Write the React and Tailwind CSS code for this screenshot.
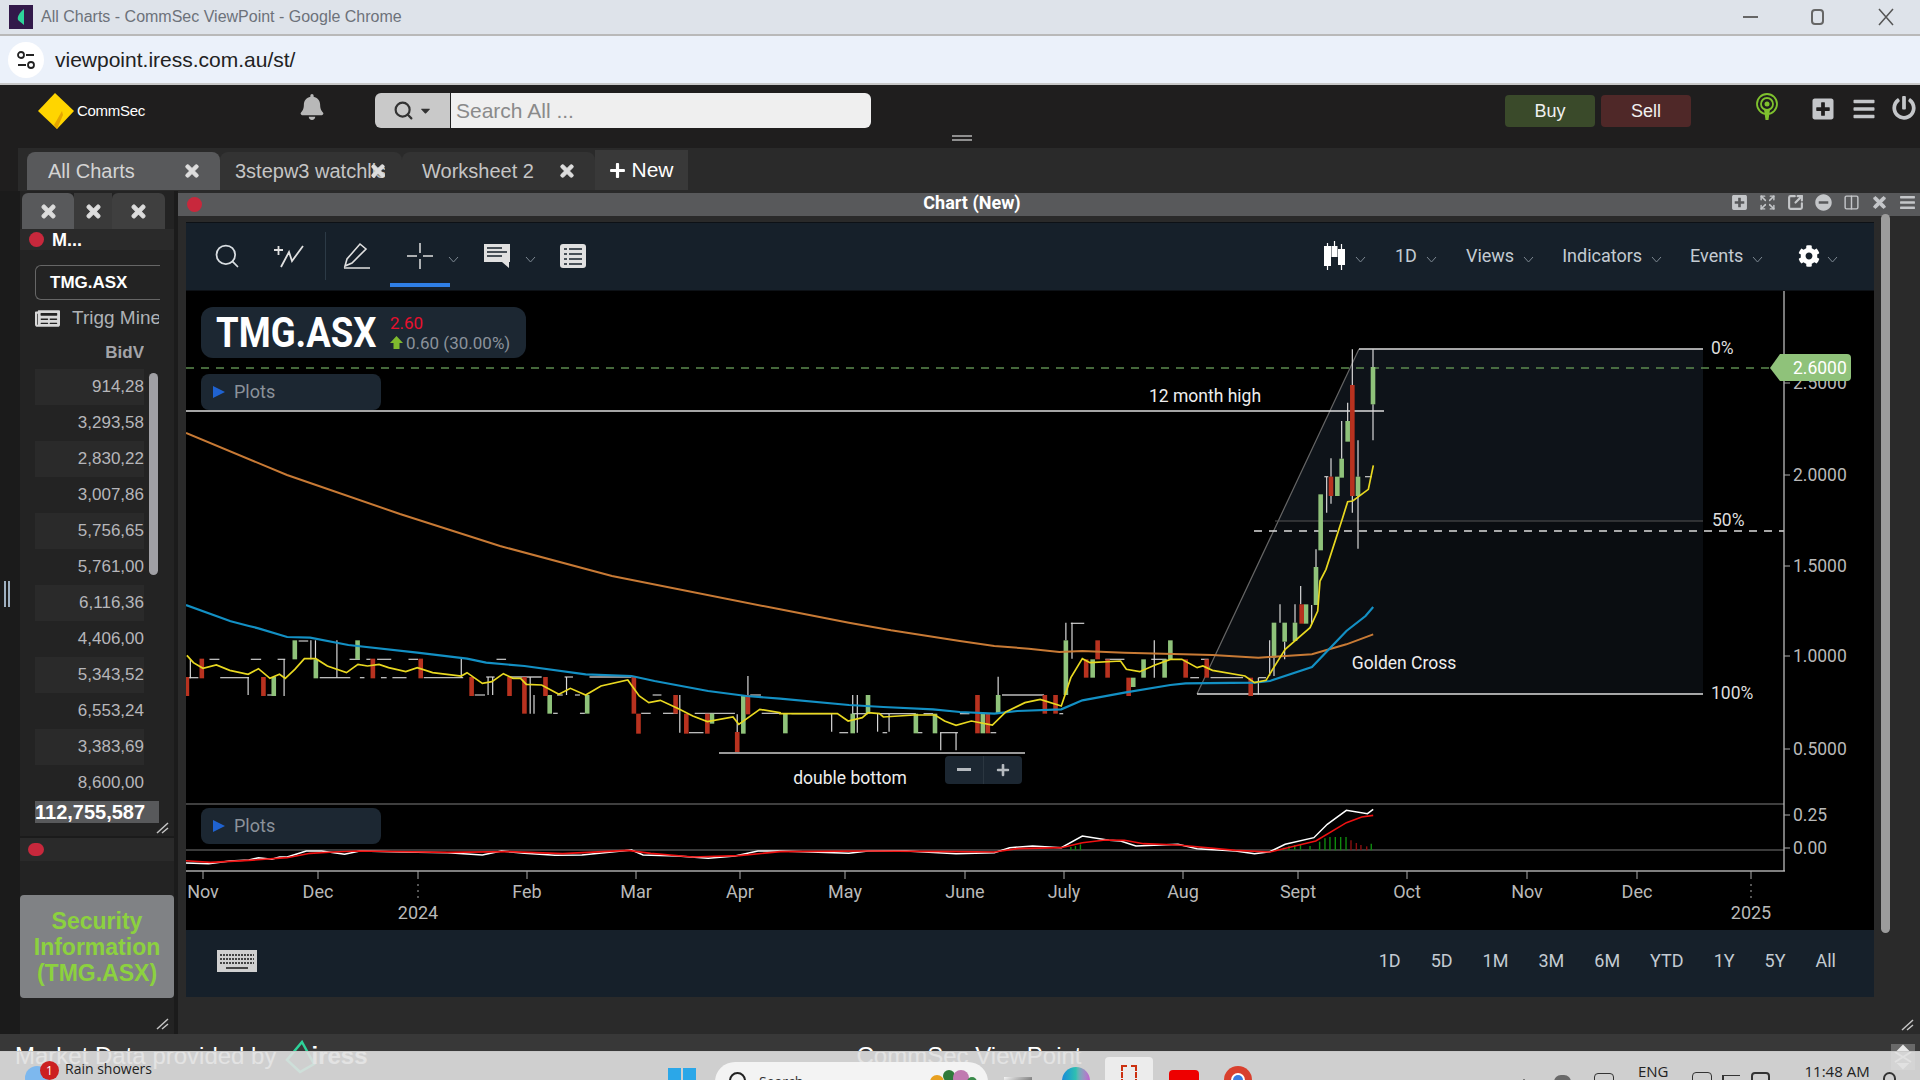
import { FaBars, FaBell, FaCog, FaMinusCircle, FaNewspaper, FaPlus, FaPlusSquare, FaPowerOff, FaTimes, FaCaretDown } from 'react-icons/fa';
import { Search, Columns2, SquareArrowOutUpRight, Expand } from 'lucide-react';

// chart numbers were read off crops of the picture, so each block has its own scale
const a = ([x, y]) => [180 + x / 2.613, 620 + y / 3];
const b = ([x, y]) => [780 + x / 2.613, 580 + y / 3];
const c = ([x, y]) => [1200 + x / 3, 330 + y / 3];
const toPoints = (list) => list.map((p) => p.join(',')).join(' ');

const yellow = [
  ...[[18, 103], [35, 125], [60, 142], [95, 132], [130, 148], [178, 160], [205, 143], [235, 172], [260, 160], [275, 172], [300, 145], [325, 113], [355, 113], [385, 135], [435, 155], [465, 130], [490, 135], [520, 130], [545, 140], [590, 152], [620, 140], [660, 155], [735, 165], [750, 155], [790, 187], [815, 182], [845, 158], [870, 172], [890, 172], [905, 190], [945, 192], [990, 220], [1020, 202], [1060, 222], [1100, 195], [1170, 177], [1200, 225], [1225, 245], [1255, 238], [1300, 262], [1340, 285], [1378, 302], [1445, 288], [1460, 310], [1515, 265], [1568, 275]].map(a),
  ...[[0, 398], [150, 398], [178, 420], [215, 410], [230, 395], [260, 398], [270, 408], [350, 402], [405, 402], [430, 420], [460, 433], [500, 420], [555, 432], [590, 393], [640, 365], [680, 355], [735, 375], [760, 290], [790, 233], [810, 245], [890, 240], [905, 265], [940, 272], [980, 252], [1020, 235], [1050, 235], [1090, 260], [1105, 255], [1130, 268], [1215, 285], [1240, 305], [1270, 298], [1290, 260], [1320, 205], [1385, 140], [1405, 90]].map(b),
  ...[[360, 750], [378, 715], [428, 560], [443, 512], [458, 510], [505, 475], [520, 403]].map(c),
];
const blue = [
  [186, 604], [230, 620],
  ...[[130, 0], [180, 15], [205, 22], [280, 48], [340, 50], [440, 72], [620, 95], [750, 113], [800, 125], [900, 135], [1060, 160], [1180, 165], [1240, 180], [1380, 210], [1480, 225], [1568, 233]].map(a),
  ...[[180, 372], [270, 378], [400, 385], [470, 393], [560, 398], [620, 390], [735, 385], [790, 358], [900, 335], [1020, 312], [1060, 307], [1240, 305], [1280, 300], [1390, 258], [1480, 150], [1530, 105], [1550, 78]].map(b),
];
const orange = [
  [186, 432], [287, 474], [400, 513], [500, 545], [612, 575],
  ...[[0, 85], [180, 125], [290, 148], [470, 180], [560, 195], [650, 203], [730, 213], [790, 210], [900, 215], [1130, 222], [1250, 230], [1390, 220], [1480, 190], [1550, 160]].map(b),
];
const macdWhite = [
  ...[[0, 725], [75, 728], [130, 720], [180, 717], [205, 710], [240, 715], [260, 708], [280, 708], [330, 690], [370, 690], [430, 700], [470, 690], [580, 693], [700, 695], [790, 702], [840, 690], [900, 697], [980, 703], [1050, 702], [1180, 687], [1210, 702], [1300, 705], [1380, 712], [1450, 705], [1510, 690], [1568, 690]].map(a),
  ...[[180, 817], [230, 810], [330, 810], [460, 818], [560, 815], [600, 800], [660, 795], [735, 800], [790, 765], [860, 778], [890, 780], [930, 795], [1040, 790], [1090, 803], [1190, 810], [1240, 818], [1280, 812], [1320, 790], [1395, 770], [1430, 730], [1480, 688], [1535, 698], [1550, 685]].map(b),
];
const macdRed = [
  ...[[0, 718], [80, 724], [180, 718], [280, 710], [340, 697], [400, 693], [470, 690], [700, 694], [860, 692], [1000, 698], [1170, 688], [1230, 697], [1340, 708], [1460, 704], [1568, 692]].map(a),
  ...[[230, 810], [460, 812], [560, 813], [620, 803], [735, 800], [790, 785], [850, 777], [900, 778], [950, 788], [1040, 792], [1190, 808], [1280, 813], [1400, 780], [1480, 725], [1520, 708], [1550, 703]].map(b),
];

const greenBodies = [
  ...[[245, 168, 225], [300, 58, 115], [355, 115, 172], [464, 58, 115], [966, 222, 278], [1064, 222, 278], [1390, 278, 308], [1472, 222, 338]].map(([x, t, e]) => [a([x, t]), a([x, e])]),
  ...[[14, 398, 457], [190, 398, 457], [230, 342, 398], [355, 398, 457], [405, 398, 457], [530, 398, 457], [570, 342, 398], [747, 178, 342], [817, 235, 290], [923, 290, 318], [950, 235, 290], [1005, 235, 290], [1020, 178, 235]].map(([x, t, e]) => [b([x, t]), b([x, e])]),
  ...[[222, 875, 980], [254, 875, 932], [285, 875, 930], [318, 820, 878], [348, 708, 822], [362, 490, 658], [412, 437, 495], [425, 383, 440], [443, 270, 332], [474, 437, 495], [519, 108, 220]].map(([x, t, e]) => [c([x, t]), c([x, e])]),
];
const redBodies = [
  ...[[18, 168, 225], [57, 113, 172], [218, 168, 225], [504, 113, 172], [629, 113, 172], [762, 168, 225], [861, 168, 225], [900, 168, 278], [955, 168, 225], [1186, 168, 278], [1198, 278, 338], [1295, 222, 278], [1323, 278, 338], [1378, 278, 338], [1456, 333, 393], [1484, 222, 280]].map(([x, t, e]) => [a([x, t]), a([x, e])]),
  ...[[516, 342, 457], [543, 398, 457], [692, 342, 398], [720, 342, 398], [800, 235, 290], [830, 178, 235], [856, 235, 290], [911, 290, 345], [1060, 235, 290], [1115, 235, 290], [1230, 290, 345]].map(([x, t, e]) => [b([x, t]), b([x, e])]),
  ...[[305, 820, 878], [393, 437, 495], [457, 162, 495]].map(([x, t, e]) => [c([x, t]), c([x, e])]),
];
const wicks = [
  ...[[27, 115, 172], [178, 168, 222], [245, 168, 225], [272, 115, 225], [342, 58, 115], [354, 58, 115], [410, 58, 170], [735, 113, 170], [805, 168, 222], [817, 168, 222], [915, 168, 278], [925, 222, 278], [1010, 168, 222], [1306, 222, 335], [1484, 165, 225], [1456, 280, 333]].map(([x, t, e]) => [a([x, t]), a([x, e])]),
  ...[[135, 398, 452], [190, 342, 400], [202, 342, 455], [255, 398, 452], [285, 398, 452], [420, 455, 508], [460, 455, 508], [570, 287, 342], [747, 125, 178], [763, 125, 233], [978, 178, 290], [1250, 290, 340]].map(([x, t, e]) => [b([x, t]), b([x, e])]),
  ...[[209, 928, 1035], [222, 980, 1035], [240, 820, 875], [254, 932, 985], [285, 820, 875], [302, 765, 820], [335, 822, 880], [348, 655, 708], [380, 438, 545], [393, 382, 437], [393, 495, 518], [425, 270, 383], [443, 215, 270], [457, 55, 162], [457, 495, 545], [474, 328, 437], [474, 495, 653], [519, 55, 108], [519, 220, 328]].map(([x, t, e]) => [c([x, t]), c([x, e])]),
];
const dashes = [
  ...[[77, 103, 115], [185, 212, 115], [255, 275, 115], [310, 335, 60], [22, 48, 170], [105, 180, 170], [228, 250, 222], [365, 445, 170], [470, 482, 170], [525, 540, 170], [555, 592, 170], [443, 470, 115], [487, 498, 115], [515, 552, 115], [597, 622, 115], [637, 740, 170], [827, 852, 115], [770, 797, 222], [800, 822, 168], [860, 945, 168], [1005, 1027, 168], [985, 1000, 222], [1032, 1045, 222], [1070, 1180, 168], [975, 987, 277], [1045, 1058, 277], [1235, 1258, 222], [1205, 1230, 277], [1262, 1300, 277], [1345, 1450, 277], [1330, 1368, 335], [1520, 1568, 277], [1490, 1518, 222]].map(([x, e, y]) => [a([x, y]), a([e, y])]),
  ...[[30, 135, 398], [155, 178, 455], [190, 230, 398], [260, 285, 398], [268, 280, 455], [285, 355, 398], [375, 400, 398], [360, 372, 455], [418, 465, 455], [470, 495, 398], [580, 690, 342], [730, 740, 398], [760, 795, 127], [850, 900, 235], [970, 1010, 235], [1100, 1120, 235], [1072, 1095, 290], [1125, 1210, 290], [1250, 1270, 290], [550, 565, 455]].map(([x, e, y]) => [b([x, y]), b([e, y])]),
  ...[[373, 385, 437], [495, 515, 437]].map(([x, e, y]) => [c([x, y]), c([e, y])]),
];
const macdBars = [760, 772, 785, 1300, 1316, 1330, 1345, 1360, 1385, 1410, 1424, 1437, 1451, 1465, 1479, 1545].map((x, i) => [b([x, 808]), b([x, [798, 795, 790, 803, 800, 795, 792, 792, 795, 782, 772, 768, 768, 768, 768, 788][i]])]);
const macdRedBars = [1492, 1506, 1518, 1533].map((x, i) => [b([x, 808]), b([x, [778, 786, 792, 796][i]])]);

const monthLabels = [
  ['Nov', 203], ['Dec', 318], ['Feb', 527], ['Mar', 636], ['Apr', 740], ['May', 845], ['June', 965], ['July', 1064], ['Aug', 1183], ['Sept', 1298], ['Oct', 1407], ['Nov', 1527], ['Dec', 1637],
];
const priceLabels = [['2.5000', 382], ['2.0000', 474], ['1.5000', 565], ['1.0000', 655], ['0.5000', 748], ['0.25', 814], ['0.00', 847]];
const bids = ['914,28', '3,293,58', '2,830,22', '3,007,86', '5,756,65', '5,761,00', '6,116,36', '4,406,00', '5,343,52', '6,553,24', '3,383,69', '8,600,00'];
const ranges = ['1D', '5D', '1M', '3M', '6M', 'YTD', '1Y', '5Y', 'All'];

function Chevron({ className = '' }) {
  return (
    <svg width="11" height="7" viewBox="0 0 11 7" className={className}>
      <path d="M1 1l4.500 5L10 1" fill="none" stroke="#7c8791" strokeWidth="1" />
    </svg>
  );
}

function Chart() {
  return (
    <svg viewBox="186 290 1688 640" width="1688" height="640" className="block">
      <polygon points="1278,520 1359,348 1703,348 1703,520" fill="#0e1319" />
      <polygon points="1197,693 1278,520 1703,520 1703,693" fill="#0a0d11" />
      <line x1="1197" y1="693" x2="1359" y2="348" stroke="#666" strokeWidth="1.200" />
      <line x1="1359" y1="348" x2="1703" y2="348" stroke="#ddd" strokeWidth="1.500" />
      <line x1="1197" y1="693" x2="1703" y2="693" stroke="#ddd" strokeWidth="1.500" />
      <line x1="1275" y1="520" x2="1703" y2="520" stroke="#555" strokeWidth="1" />
      <line x1="186" y1="367" x2="1772" y2="367" stroke="#5c8a4f" strokeWidth="1.500" strokeDasharray="8 7" />
      <line x1="1254" y1="530" x2="1784" y2="530" stroke="#ddd" strokeWidth="1.500" strokeDasharray="8 7" />
      <line x1="186" y1="410" x2="1384" y2="410" stroke="#ddd" strokeWidth="1.500" />
      <line x1="719" y1="752" x2="1025" y2="752" stroke="#ccc" strokeWidth="1.500" />

      {dashes.map(([p, q], i) => (
        <line key={i} x1={p[0]} y1={p[1]} x2={q[0]} y2={q[1]} stroke="#bbb" strokeWidth="1.300" />
      ))}
      {wicks.map(([p, q], i) => (
        <line key={i} x1={p[0]} y1={p[1]} x2={q[0]} y2={q[1]} stroke="#d8d8d8" strokeWidth="1.200" />
      ))}
      {greenBodies.map(([p, q], i) => (
        <rect key={i} x={p[0] - 2.300} y={p[1]} width="4.600" height={q[1] - p[1]} fill="#8fc27a" />
      ))}
      {redBodies.map(([p, q], i) => (
        <rect key={i} x={p[0] - 2.300} y={p[1]} width="4.600" height={q[1] - p[1]} fill="#b8321f" />
      ))}

      <polyline points={toPoints(orange)} fill="none" stroke="#c87a35" strokeWidth="2" />
      <polyline points={toPoints(blue)} fill="none" stroke="#1390c4" strokeWidth="2.200" />
      <polyline points={toPoints(yellow)} fill="none" stroke="#e8d820" strokeWidth="1.700" />

      <text x="1205" y="401" textAnchor="middle" fontFamily="Roboto" fontSize="17.500" fill="#eee">12 month high</text>
      <text x="1404" y="668" textAnchor="middle" fontFamily="Roboto" fontSize="17.500" fill="#eee">Golden Cross</text>
      <text x="850" y="783" textAnchor="middle" fontFamily="Roboto" fontSize="17.500" fill="#eee">double bottom</text>
      <text x="1711" y="353" fontFamily="Roboto" fontSize="17.500" fill="#ddd">0%</text>
      <text x="1712" y="525" fontFamily="Roboto" fontSize="17.500" fill="#ddd">50%</text>
      <text x="1711" y="698" fontFamily="Roboto" fontSize="17.500" fill="#ddd">100%</text>

      <line x1="186" y1="803" x2="1784" y2="803" stroke="#555" strokeWidth="1.500" />
      <line x1="186" y1="849" x2="1784" y2="849" stroke="#777" strokeWidth="1.200" />
      {macdBars.map(([p, q], i) => (
        <line key={i} x1={p[0]} y1={p[1]} x2={q[0]} y2={q[1]} stroke="#0f8a0f" strokeWidth="1.400" />
      ))}
      {macdRedBars.map(([p, q], i) => (
        <line key={i} x1={p[0]} y1={p[1]} x2={q[0]} y2={q[1]} stroke="#8a1010" strokeWidth="1.400" />
      ))}
      <polyline points={toPoints(macdWhite)} fill="none" stroke="#fff" strokeWidth="1.500" />
      <polyline points={toPoints(macdRed)} fill="none" stroke="#ee1111" strokeWidth="1.600" />

      <line x1="186" y1="870" x2="1785" y2="870" stroke="#aaa" strokeWidth="1.300" />
      <line x1="1784" y1="290" x2="1784" y2="870" stroke="#bbb" strokeWidth="1.300" />
      {monthLabels.map(([name, x], i) => (
        <g key={i}>
          <line x1={x} y1="870" x2={x} y2="878" stroke="#aaa" />
          <text x={x} y="897" textAnchor="middle" fontFamily="Roboto" fontSize="18" fill="#b9b9b9">{name}</text>
        </g>
      ))}
      <path d="M418 870v8M418 883v2M418 889v2M418 895v2M1751 870v8M1751 883v2M1751 889v2M1751 895v2" stroke="#aaa" />
      <text x="418" y="918" textAnchor="middle" fontFamily="Roboto" fontSize="18" fill="#b9b9b9">2024</text>
      <text x="1751" y="918" textAnchor="middle" fontFamily="Roboto" fontSize="18" fill="#b9b9b9">2025</text>
      {priceLabels.map(([name, y]) => (
        <g key={name}>
          <line x1="1784" y1={y} x2="1790" y2={y} stroke="#aaa" />
          <text x="1793" y={y + 6} fontFamily="Roboto" fontSize="17.500" fill="#b9b9b9">{name}</text>
        </g>
      ))}
      <path d="M1770 367l10-14h67a4 4 0 014 4v19a4 4 0 01-4 4h-67z" fill="#8fc27a" />
      <text x="1793" y="373" fontFamily="Roboto" fontSize="17.500" fill="#fff">2.6000</text>
    </svg>
  );
}

function PlotsButton({ className }) {
  return (
    <div className={`absolute left-[15px] flex h-[36px] w-[180px] items-center rounded-lg bg-[#1c2732] pl-3 font-['Roboto'] text-lg text-[#8b929a] ${className}`}>
      <span className="mr-[9px] h-0 w-0 border-y-[6px] border-l-[12px] border-y-transparent border-l-[#1f62d0]" />
      Plots
    </div>
  );
}

function ToolbarLabel({ children, className = '' }) {
  return (
    <div className={`flex items-center gap-[9px] text-lg text-[#c3cbd2] ${className}`}>
      {children}
      <Chevron className="mt-2" />
    </div>
  );
}

function LeftPanel() {
  return (
    <div className="flex w-[154px] flex-col bg-[#232323] font-['Liberation_Sans',sans-serif]">
      <div className="mt-[2px] flex h-[36px] w-[146px] pl-[2px] text-[#ddd]">
        <div className="flex w-[52px] items-center justify-center rounded-t-md bg-[#58595b]"><FaTimes size={19} className="stroke-[30]" /></div>
        <div className="flex w-[38px] items-center justify-center bg-[#3a3a3a]"><FaTimes size={19} className="stroke-[30]" /></div>
        <div className="flex w-[53px] items-center justify-center rounded-t-md bg-[#3f3f3f]"><FaTimes size={19} className="stroke-[30]" /></div>
      </div>
      <div className="flex h-[21px] items-center bg-[#2a2a2a] pl-[9px]">
        <span className="h-[15px] w-[15px] rounded-full bg-[#c8283c]" />
        <span className="ml-2 text-lg font-bold text-white">M...</span>
      </div>
      <div className="relative flex h-[588px] flex-col border-b-2 border-[#1b1b1b] pl-[15px]">
        <div className="mt-[15px] flex h-[35px] w-[125px] items-center rounded-tl-md rounded-bl-md border-y border-l border-[#666] pl-[14px] text-[17px] font-bold text-white">TMG.ASX</div>
        <div className="flex h-[36px] w-[124px] items-center overflow-hidden">
          <FaNewspaper size={25} className="shrink-0 text-[#d8d8d8]" />
          <span className="ml-[12px] whitespace-nowrap text-[19px] text-[#aeb2b6]">Trigg Mine</span>
        </div>
        <div className="h-[33px] w-[109px] overflow-hidden pt-[7px] text-right text-[17px] font-bold leading-5 text-[#a4a4a8]">BidV</div>
        {bids.map((bid, i) => (
          <div key={bid} className={`flex h-[36px] w-[109px] items-center justify-end overflow-hidden text-[17px] text-[#b6b6ba] ${i % 2 === 0 ? 'bg-[#2a2a2a]' : ''}`}>
            <span className="whitespace-nowrap">{bid}</span>
          </div>
        ))}
        <div className="flex h-[22px] w-[124px] items-center bg-[#58595b] text-[20px] font-bold text-white">112,755,587</div>
        <div className="absolute right-[16px] top-[123px] h-[202px] w-[9px] rounded-full bg-[#a0a0a5]" />
        <ResizeGrip className="absolute bottom-[2px] right-[5px]" />
      </div>
      <div className="flex h-[23px] items-center bg-[#2a2a2a] pl-[8px]">
        <span className="h-[13px] w-[16px] rounded-full bg-[#c8283c]" />
      </div>
      <div className="h-[34px]" />
      <div className="flex h-[103px] flex-col items-center justify-center rounded bg-[#808285] text-center text-[23px] font-bold leading-[26px] text-[#8cd13f]">
        <span>Security</span>
        <span>Information</span>
        <span>(TMG.ASX)</span>
      </div>
      <div className="relative flex-1">
        <ResizeGrip className="absolute bottom-[4px] right-[5px]" />
      </div>
    </div>
  );
}

function ResizeGrip({ className }) {
  return (
    <svg width="13" height="12" viewBox="0 0 13 12" className={className}>
      <path d="M1 11L12 1M6 11l6-5" stroke="#c4c4c4" strokeWidth="1.500" />
    </svg>
  );
}

function TitleIcons() {
  return (
    <div className="flex items-center gap-[11px] pr-[4px] text-[#c4c6c9]">
      <FaPlusSquare size={17} />
      <Expand size={17} />
      <SquareArrowOutUpRight size={17} strokeWidth={3} />
      <FaMinusCircle size={17} />
      <Columns2 size={17} />
      <FaTimes size={17} className="stroke-[30]" />
      <FaBars size={17} />
    </div>
  );
}

function ChartWindow() {
  return (
    <div className="flex min-w-0 flex-1 flex-col bg-[#2a2a2a] font-['Roboto',sans-serif]">
      <div className="mt-[2px] flex h-[23px] items-center bg-[#58595b] pl-[9px]">
        <span className="h-[15px] w-[15px] rounded-full bg-[#c8283c]" />
        <span className="ml-[690px] w-[160px] pb-[4px] text-center text-lg font-bold text-white">Chart (New)</span>
        <div className="ml-auto pb-[4px]"><TitleIcons /></div>
      </div>
      <div className="flex flex-1">
        <div className="ml-[8px] mt-[6px] flex w-[1688px] flex-col">
          <div className="flex h-[69px] items-center border-y border-[#0d1116] bg-[#16202a] pb-[2px] pl-[27px] text-[#d8dde1]">
            <Search size={28} strokeWidth={1.500} />
            <svg width="32" height="26" viewBox="0 0 32 26" className="ml-[32px]">
              <path d="M1 7h9M5.500 3v9M8 24l8-15 3 9 11-15" fill="none" stroke="#e0e0e0" strokeWidth="1.800" />
            </svg>
            <span className="ml-[20px] h-[48px] w-px bg-[#2c3a46]" />
            <svg width="28" height="28" viewBox="0 0 28 28" className="ml-[17px]">
              <path d="M2 24l2-7L17 2l6 5L9 21z M1 26h26" fill="none" stroke="#e0e0e0" strokeWidth="1.600" />
            </svg>
            <div className="relative ml-[19px] flex h-full w-[60px] shrink-0 justify-center self-stretch">
              <svg width="26" height="26" viewBox="0 0 26 26" className="mt-[20px]">
                <path d="M13 0v10M13 16v10M0 13h10M16 13h10" stroke="#e0e0e0" strokeWidth="1.500" />
              </svg>
              <span className="absolute bottom-[1px] left-0 h-[4px] w-[60px] bg-[#2f7fe6]" />
            </div>
            <Chevron className="ml-[-2px] mt-2" />
            <svg width="26" height="24" viewBox="0 0 26 24" className="ml-[25px] text-[#e0e0e0]">
              <path d="M0 0h26v18h-1v6l-7-6H0z" fill="currentColor" />
              <path d="M3 4h15M3 8h20M3 12h15" stroke="#16202a" strokeWidth="1.500" />
            </svg>
            <Chevron className="ml-[15px] mt-2" />
            <svg width="26" height="24" viewBox="0 0 26 24" className="ml-[24px]">
              <rect width="26" height="24" rx="3" fill="#e0e0e0" />
              <path d="M4 5h3M9 5h13M4 10h3M9 10h13M4 15h3M9 15h13M4 20h3M9 20h13" stroke="#16202a" strokeWidth="1.500" />
            </svg>
            <svg width="28" height="30" viewBox="0 0 28 30" className="ml-[734px]">
              <path d="M4 5h7v20H4zM18 8h7v16h-7z" fill="#fff" />
              <path d="M7.500 2v27M21.500 3v26M14.500 0v16" stroke="#fff" strokeWidth="1.200" />
              <path d="M11.500 5h6v11h-6z" fill="#fff" />
            </svg>
            <Chevron className="ml-[7px] mt-2" />
            <ToolbarLabel className="ml-[29px]">1D</ToolbarLabel>
            <ToolbarLabel className="ml-[29px]">Views</ToolbarLabel>
            <ToolbarLabel className="ml-[28px]">Indicators</ToolbarLabel>
            <ToolbarLabel className="ml-[28px]">Events</ToolbarLabel>
            <FaCog size={22} className="ml-[35px] text-white" />
            <Chevron className="ml-[7px] mt-2" />
          </div>
          <div className="relative h-[639px] overflow-hidden bg-black">
            <Chart />
            <div className="absolute left-[15px] top-[16px] flex h-[51px] w-[325px] items-center rounded-xl bg-[#1c2732] pl-[15px]">
              <span className="w-[161px] origin-left scale-x-[0.87] whitespace-nowrap text-[42px] font-bold text-white">TMG.ASX</span>
              <div className="ml-[13px] flex flex-col whitespace-nowrap text-[17px] leading-5">
                <span className="text-[#e8102e]">2.60</span>
                <span className="flex items-center gap-[3px] text-[#8b929a]">
                  <span className="text-[#7fba2e]">
                    <svg width="13" height="14" viewBox="0 0 13 14"><path d="M6.500 0L13 7H9.500v6h-6V7H0z" fill="currentColor" /></svg>
                  </span>
                  0.60 (30.00%)
                </span>
              </div>
            </div>
            <PlotsButton className="top-[83px]" />
            <PlotsButton className="top-[517px]" />
            <div className="absolute left-[759px] top-[465px] flex h-[28px] w-[77px] items-center rounded bg-[#1c2732] text-[#b5babf]">
              <span className="flex h-full w-[39px] items-center justify-center border-r border-[#2b3640]"><svg width="14" height="4"><rect width="14" height="3" fill="currentColor" /></svg></span>
              <span className="flex h-full flex-1 items-center justify-center"><FaPlus size={14} /></span>
            </div>
          </div>
          <div className="flex h-[67px] items-center justify-between bg-[#16202a] pb-[6px] pl-[31px] pr-[38px] text-[#c3cbd2]">
            <svg width="40" height="22" viewBox="0 0 40 22">
              <rect width="40" height="22" fill="#d0d0d0" />
              <path d="M3 5h34M3 9h34M3 13h34" stroke="#444" strokeWidth="1.800" strokeDasharray="2 1" />
              <path d="M9 18h22" stroke="#444" strokeWidth="2" />
            </svg>
            <div className="flex gap-[30px] text-lg">
              {ranges.map((r) => <span key={r}>{r}</span>)}
            </div>
          </div>
          <div className="relative flex-1">
            <ResizeGrip className="absolute bottom-[3px] right-[-40px]" />
          </div>
        </div>
        <div className="ml-[7px] mt-[-2px] h-[719px] w-[9px] rounded-full bg-[#9c9c9c]" />
      </div>
    </div>
  );
}

function Header() {
  return (
    <div className="flex h-[61px] items-start bg-[#1f1e1e] font-['Liberation_Sans',sans-serif]">
      <svg width="36" height="36" viewBox="0 0 36 36" className="ml-[38px] mt-[6px] shrink-0">
        <path d="M17 0l19 18-17 18L0 18z" fill="#ffd500" />
        <path d="M24 18L16 32l3 4 6-14z" fill="#e5a600" />
      </svg>
      <span className="ml-[3px] mt-[13px] w-[90px] text-[15px] tracking-[-0.3px] text-white">CommSec</span>
      <FaBell size={26} className="ml-[132px] mt-[7px] text-[#b8b8b8]" />
      <div className="ml-[50px] mt-[6px] flex h-[35px] w-[496px] overflow-hidden rounded-md">
        <div className="flex w-[76px] items-center justify-center gap-[4px] border-r border-[#222] bg-[#c9c9c9] text-[#333]">
          <Search size={21} strokeWidth={2.500} />
          <FaCaretDown size={15} />
        </div>
        <div className="flex flex-1 items-center bg-[#efefef] pl-[5px] text-[21px] text-[#8a8a8a]">Search All ...</div>
      </div>
      <svg width="20" height="6" className="ml-[81px] mt-[48px]"><path d="M0 1h20M0 5h20" stroke="#b5b5b5" strokeWidth="1.500" /></svg>
      <div className="ml-[533px] mt-[8px] flex h-[32px] w-[90px] items-center justify-center rounded bg-[#3a4a2a] text-lg text-[#f0f0f0]">Buy</div>
      <div className="ml-[6px] mt-[8px] flex h-[32px] w-[90px] items-center justify-center rounded bg-[#4f2828] text-lg text-[#f0f0f0]">Sell</div>
      <svg width="24" height="30" viewBox="0 0 24 30" className="ml-[64px] mt-[5px]">
        <path d="M9 17h6l-1.500 11h-3z" fill="#7fc22e" />
        <circle cx="12" cy="12" r="10" fill="none" stroke="#7fc22e" strokeWidth="1.800" />
        <circle cx="12" cy="12" r="6" fill="none" stroke="#7fc22e" strokeWidth="1.800" />
        <circle cx="12" cy="12" r="2.500" fill="#7fc22e" />
      </svg>
      <FaPlusSquare size={24} className="ml-[32px] mt-[10px] text-[#c4c6c9]" />
      <FaBars size={24} className="ml-[17px] mt-[10px] text-[#c4c6c9]" />
      <FaPowerOff size={24} className="ml-[16px] mt-[9px] text-[#c4c6c9]" />
    </div>
  );
}

function TabBar() {
  const tabs = [
    ['All Charts', 'w-[193px] bg-[#58595b] text-[#d4d4d4]', 'ml-[21px]', 'right-[19px]'],
    ['3stepw3 watchlist', 'w-[182px] bg-[#333333] text-[#c5c5c5]', 'ml-[15px] w-[150px] overflow-hidden', 'right-[15px]'],
    ['Worksheet 2', 'w-[193px] bg-[#333333] text-[#c5c5c5]', 'ml-[20px]', 'right-[19px]'],
  ];
  return (
    <div className="ml-[18px] flex h-[43px] items-end bg-[#2a2a2a] pb-[1px] pl-[9px] font-['Liberation_Sans',sans-serif] text-xl">
      {tabs.map(([label, style, pad, close]) => (
        <div key={label} className={`relative flex h-[38px] items-center overflow-hidden rounded-t-lg ${style}`}>
          <span className={`${pad} whitespace-nowrap`}>{label}</span>
          <FaTimes size={18} className={`absolute ${close} stroke-[30] text-[#ddd]`} />
        </div>
      ))}
      <div className="flex h-[40px] w-[93px] items-center justify-center gap-[5px] bg-[#393939] text-[21px] text-white">
        <FaPlus size={17} />
        New
      </div>
    </div>
  );
}

function Taskbar() {
  return (
    <div className="absolute inset-x-0 bottom-0 flex h-[29px] items-start overflow-hidden border-t border-[#c9c9c9] bg-[#e0e0e0]/90 font-['Open_Sans',sans-serif]">
      <span className="ml-[25px] mt-[14px] h-[24px] w-[24px] rounded-full bg-[#7db8ee]" />
      <span className="ml-[-9px] mt-[9px] flex h-[19px] w-[19px] items-center justify-center rounded-full bg-[#cc2020] text-xs text-white">1</span>
      <span className="ml-[6px] mt-[7px] whitespace-nowrap text-sm text-[#222]">Rain showers</span>
      <svg width="28" height="28" viewBox="0 0 28 28" className="ml-[516px] mt-[16px] shrink-0">
        <path d="M0 0h13v13H0zM15 0h13v13H15zM0 15h13v13H0zM15 15h13v13H15z" fill="#2ba7e8" />
      </svg>
      <div className="ml-[19px] mt-[10px] flex h-[40px] w-[273px] shrink-0 rounded-t-[20px] bg-[#f3f3f3] pl-[14px] pt-[10px]">
        <span className="h-[17px] w-[17px] rounded-full border-2 border-[#222]" />
        <span className="ml-[13px] text-sm text-[#333]">Search</span>
        <svg width="50" height="22" viewBox="0 0 50 22" className="ml-[124px] mt-[-6px] shrink-0">
          <circle cx="10" cy="16" r="7" fill="#e8a020" />
          <circle cx="22" cy="10" r="6" fill="#2f7a3a" />
          <circle cx="34" cy="12" r="8" fill="#c07ab0" />
          <circle cx="24" cy="20" r="6" fill="#e06a30" />
          <circle cx="45" cy="16" r="5" fill="#3a8a4a" />
        </svg>
      </div>
      <span className="ml-[16px] mt-[25px] h-[20px] w-[28px] shrink-0 bg-gradient-to-br from-[#f5f5f5] to-[#333]" />
      <span className="ml-[30px] mt-[15px] h-[24px] w-[28px] shrink-0 rounded-t-full bg-gradient-to-r from-[#1f8ad8] via-[#30c0b0] to-[#c060d0]" />
      <div className="ml-[15px] mt-[5px] flex h-[30px] w-[48px] shrink-0 justify-center rounded-t bg-[#ececec] pt-[8px]">
        <span className="h-[20px] w-[16px] border-2 border-dashed border-[#cc3010]" />
      </div>
      <span className="ml-[16px] mt-[18px] h-[20px] w-[30px] shrink-0 rounded bg-[#ee0000]" />
      <svg width="28" height="28" viewBox="0 0 28 28" className="ml-[25px] mt-[14px] shrink-0">
        <circle cx="14" cy="14" r="14" fill="#d9402e" />
        <path d="M14 14L2 21a14 14 0 0012 7z" fill="#34a853" />
        <path d="M14 14l12 7a14 14 0 00-12 7z" fill="#fbbc05" />
        <circle cx="14" cy="14" r="7" fill="#fff" />
        <circle cx="14" cy="14" r="5" fill="#3a7de0" />
      </svg>
      <svg width="12" height="8" className="ml-[266px] mt-[26px] shrink-0"><path d="M1 7l5-5 5 5" fill="none" stroke="#333" strokeWidth="1.500" /></svg>
      <span className="ml-[24px] mt-[23px] h-[14px] w-[17px] shrink-0 rounded-full bg-[#6a6a6a]" />
      <span className="ml-[23px] mt-[21px] h-[14px] w-[20px] shrink-0 rounded-sm border border-[#333]" />
      <span className="ml-[24px] mt-[9px] text-[15px] leading-5 text-[#222]">ENG</span>
      <span className="ml-[23px] mt-[20px] h-[14px] w-[20px] shrink-0 rounded-sm border border-[#333]" />
      <span className="ml-[10px] mt-[23px] h-[12px] w-[18px] shrink-0 border-l-2 border-t border-[#333]" />
      <span className="ml-[11px] mt-[20px] h-[12px] w-[19px] shrink-0 rounded-sm border-2 border-[#333]" />
      <span className="ml-[35px] mt-[9px] whitespace-nowrap text-[15px] leading-5 text-[#222]">11:48 AM</span>
      <span className="ml-[13px] mt-[20px] h-[18px] w-[13px] shrink-0 rounded-full border-2 border-[#333]" />
    </div>
  );
}

export default function App() {
  return (
    <div className="relative flex h-[1080px] w-[1920px] flex-col overflow-hidden bg-[#2a2a2a]">
      <div className="flex h-[36px] shrink-0 items-center border-b-2 border-[#b9b9b9] bg-[#dee3ea] pl-[9px] font-['Liberation_Sans',sans-serif]">
        <svg width="24" height="24" viewBox="0 0 24 24">
          <rect width="24" height="24" fill="#32194a" />
          <path d="M15 4c-5 4-7 8-6 11l6 5z" fill="#2ed39a" />
        </svg>
        <span className="ml-[8px] text-base text-[#6d727a]">All Charts - CommSec ViewPoint - Google Chrome</span>
        <div className="ml-auto flex items-center text-[#555]">
          <span className="h-[2px] w-[15px] bg-[#666]" />
          <span className="ml-[53px] h-[16px] w-[13px] rounded-sm border-2 border-[#666]" />
          <svg width="18" height="18" viewBox="0 0 18 18" className="ml-[53px] mr-[25px]"><path d="M2 1l14 16M16 1L2 17" stroke="#555" strokeWidth="1.500" /></svg>
        </div>
      </div>
      <div className="flex h-[49px] shrink-0 items-center border-b-2 border-[#c8c8c8] bg-[#ebf1fa] pl-[8px] font-['Liberation_Sans',sans-serif]">
        <span className="flex h-[36px] w-[36px] items-center justify-center rounded-full bg-white">
          <svg width="20" height="20" viewBox="0 0 20 20">
            <circle cx="5" cy="5" r="3" fill="none" stroke="#222" strokeWidth="1.800" />
            <path d="M10 5h8M2 15h8" stroke="#222" strokeWidth="1.800" />
            <circle cx="15" cy="15" r="3" fill="none" stroke="#222" strokeWidth="1.800" />
          </svg>
        </span>
        <span className="ml-[11px] text-[21px] text-[#222]">viewpoint.iress.com.au/st/</span>
      </div>
      <div className="h-[2px] shrink-0 bg-[#1f1e1e]" />
      <Header />
      <div className="shrink-0 bg-[#1f1e1e]"><TabBar /></div>
      <div className="flex min-h-0 flex-1 bg-[#1b1b1b]">
        <div className="relative w-[20px] shrink-0">
          <span className="absolute left-[4px] top-[390px] h-[26px] w-[6px] border-x-2 border-[#9fb0c0]" />
        </div>
        <LeftPanel />
        <div className="w-[4px] shrink-0" />
        <ChartWindow />
      </div>
      <div className="flex h-[46px] shrink-0 bg-[#383838] font-['Liberation_Sans',sans-serif] text-2xl leading-none text-white">
        <span className="ml-[15px] mt-[10px] whitespace-nowrap">Market Data provided by</span>
        <svg width="34" height="34" viewBox="0 0 34 34" className="ml-[8px] mt-[6px]">
          <path d="M18 2l12 22-14 8L3 20z" fill="none" stroke="#2ed39a" strokeWidth="2.500" />
        </svg>
        <span className="ml-[-7px] mt-[10px] font-bold">iress</span>
        <span className="ml-[489px] mt-[10px] whitespace-nowrap">CommSec ViewPoint</span>
        <svg width="24" height="26" viewBox="0 0 24 26" className="ml-auto mr-[5px] mt-[10px]">
          <path d="M0 0h24v26H0z" fill="#9a9a9a" opacity="0.500" />
          <path d="M12 2l4 4h-8zM12 24l4-4h-8zM4 8l16 10M20 8L4 18" fill="#e8e8e8" stroke="#e8e8e8" strokeWidth="2" />
        </svg>
      </div>
      <Taskbar />
    </div>
  );
}
